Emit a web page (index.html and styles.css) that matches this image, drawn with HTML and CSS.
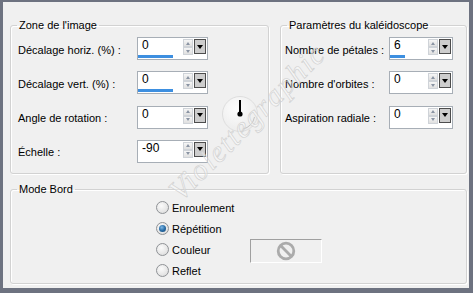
FILE: index.html
```html
<!DOCTYPE html>
<html lang="fr">
<head>
<meta charset="utf-8">
<link rel="stylesheet" href="styles.css">
</head>
<body>
<div class="dialog">
  <div class="top">
    <fieldset class="group zone">
      <legend>Zone de l'image</legend>
      <div class="zone-grid">
        <span class="lbl">Décalage horiz. (%) :</span>
        <div class="spin">
          <div class="spin-top"><span class="val">0</span><span class="arrows"><span class="up"></span><span class="down"></span></span><span class="drop"></span></div>
          <div class="bar"><span class="fill" style="width:35px"></span></div>
        </div>
        <span class="lbl">Décalage vert. (%) :</span>
        <div class="spin">
          <div class="spin-top"><span class="val">0</span><span class="arrows"><span class="up"></span><span class="down"></span></span><span class="drop"></span></div>
          <div class="bar"><span class="fill" style="width:35px"></span></div>
        </div>
        <div class="dial">
          <svg width="38" height="38" viewBox="0 0 38 38">
            <defs>
              <radialGradient id="dg" cx="0.4" cy="0.35" r="0.7">
                <stop offset="0" stop-color="#fdfdfd"/>
                <stop offset="1" stop-color="#ebebeb"/>
              </radialGradient>
            </defs>
            <circle cx="19" cy="19" r="17.5" fill="url(#dg)" stroke="#dedede" stroke-width="1"/>
            <path d="M33.5 22 A15 15 0 0 1 22 34" fill="none" stroke="#c4c4c4" stroke-width="1"/>
            <line x1="19" y1="5" x2="19" y2="19" stroke="#000" stroke-width="2"/>
            <circle cx="19" cy="19" r="2.6" fill="#000"/>
          </svg>
        </div>
        <span class="lbl">Angle de rotation :</span>
        <div class="spin">
          <div class="spin-top"><span class="val">0</span><span class="arrows"><span class="up"></span><span class="down"></span></span><span class="drop"></span></div>
          <div class="bar"></div>
        </div>
        <span class="lbl">Échelle :</span>
        <div class="spin">
          <div class="spin-top"><span class="val">-90</span><span class="arrows"><span class="up"></span><span class="down"></span></span><span class="drop"></span></div>
          <div class="bar"></div>
        </div>
      </div>
    </fieldset>
    <fieldset class="group kal">
      <legend>Paramètres du kaléidoscope</legend>
      <div class="kal-grid">
        <span class="lbl">Nombre de pétales :</span>
        <div class="spin narrow">
          <div class="spin-top"><span class="val">6</span><span class="arrows"><span class="up"></span><span class="down"></span></span><span class="drop"></span></div>
          <div class="bar"><span class="fill" style="width:15px"></span></div>
        </div>
        <span class="lbl">Nombre d'orbites :</span>
        <div class="spin narrow">
          <div class="spin-top"><span class="val">0</span><span class="arrows"><span class="up"></span><span class="down"></span></span><span class="drop"></span></div>
          <div class="bar"></div>
        </div>
        <span class="lbl">Aspiration radiale :</span>
        <div class="spin narrow">
          <div class="spin-top"><span class="val">0</span><span class="arrows"><span class="up"></span><span class="down"></span></span><span class="drop"></span></div>
          <div class="bar"></div>
        </div>
      </div>
    </fieldset>
  </div>
  <fieldset class="group mode">
    <legend>Mode Bord</legend>
    <div class="mode-grid">
      <label class="opt"><span class="radio"></span>Enroulement</label>
      <label class="opt"><span class="radio on"></span>Répétition</label>
      <label class="opt"><span class="radio"></span>Couleur</label>
      <div class="swatch">
        <svg width="22" height="22" viewBox="0 0 22 22">
          <circle cx="11" cy="11" r="7.8" fill="none" stroke="#ababab" stroke-width="2.8"/>
          <line x1="5.6" y1="5.6" x2="16.4" y2="16.4" stroke="#ababab" stroke-width="2.8"/>
        </svg>
      </div>
      <label class="opt"><span class="radio"></span>Reflet</label>
    </div>
  </fieldset>
  <div class="watermark">Violettegraphic</div>
</div>
</body>
</html>
```

FILE: styles.css
```css
* { box-sizing: border-box; }
html, body { margin: 0; padding: 0; }
body {
  width: 473px;
  height: 293px;
  overflow: hidden;
  font-family: "Liberation Sans", Arial, sans-serif;
  font-size: 11px;
  color: #000;
}
.dialog {
  position: relative;
  width: 473px;
  height: 293px;
  background: #f0f0f0;
  border-style: solid;
  border-color: #6d7280;
  border-width: 2px 4px 5px 3px;
  padding: 17px 2px 3px 7px;
  display: flex;
  flex-direction: column;
  overflow: hidden;
}
.top {
  display: flex;
  gap: 11px;
  height: 155px;
}
.group {
  margin: 0;
  padding: 0;
  min-width: 0;
  border: 1px solid #d2d2d2;
  border-radius: 3px;
  box-shadow: 1px 1px 0 #fff, inset 1px 1px 0 #fff;
}
.group legend {
  margin-left: 6px;
  padding: 0 2px;
  font-size: 11px;
  line-height: 13px;
}
.zone { width: 259px; height: 155px; }
.kal { width: 187px; height: 155px; }
.mode { width: 457px; height: 101px; margin-top: 9px; }

.zone-grid {
  display: grid;
  grid-template-columns: 119px 71px 51px;
  grid-template-rows: repeat(4, 23px);
  row-gap: 11.33px;
  padding: 5px 0 0 7px;
}
.kal-grid {
  display: grid;
  grid-template-columns: 104px 64px;
  grid-template-rows: repeat(3, 23px);
  row-gap: 11.33px;
  padding: 5px 0 0 4px;
}
.lbl {
  grid-column: 1;
  align-self: center;
  padding-top: 2px;
  white-space: nowrap;
}
.spin {
  grid-column: 2;
  width: 71px;
  height: 23px;
  border: 1px solid #a7aeb6;
  background: #fff;
  display: flex;
  flex-direction: column;
}
.spin.narrow { width: 64px; }
.spin-top {
  display: flex;
  height: 17px;
  padding-top: 1px;
}
.val {
  flex: 1;
  padding-left: 4px;
  font-size: 12px;
  line-height: 13px;
}
.arrows {
  width: 10px;
  display: flex;
  flex-direction: column;
  gap: 0;
}
.arrows span {
  height: 8px;
  background: linear-gradient(#f6f6f6, #e0e0e0);
  border: 1px solid #cfd3d8;
  display: flex;
  align-items: center;
  justify-content: center;
}
.arrows .up::after {
  content: "";
  border-left: 2.5px solid transparent;
  border-right: 2.5px solid transparent;
  border-bottom: 3px solid #8a94a3;
}
.arrows .down::after {
  content: "";
  border-left: 2.5px solid transparent;
  border-right: 2.5px solid transparent;
  border-top: 3px solid #8a94a3;
}
.drop {
  width: 12px;
  height: 15px;
  margin: 0 1px 0 1px;
  background: #cdcdcd;
  border: 1px solid #4d4d4d;
  display: flex;
  align-items: center;
  justify-content: center;
}
.drop::after {
  content: "";
  border-left: 3.5px solid transparent;
  border-right: 3.5px solid transparent;
  border-top: 4px solid #000;
}
.bar {
  height: 3px;
  margin-top: 0;
  display: flex;
}
.fill {
  display: block;
  height: 3px;
  background: #3d8fe0;
}
.dial {
  grid-column: 3;
  grid-row: 2 / span 2;
  align-self: end;
  margin: 0 0 -4px 13px;
  width: 38px;
  height: 38px;
}
.dial svg { display: block; }

.mode-grid {
  display: grid;
  grid-template-columns: 94px 72px;
  grid-template-rows: repeat(4, 21px);
  padding: 1px 0 0 145px;
}
.opt {
  grid-column: 1;
  display: flex;
  align-items: center;
  gap: 3px;
  white-space: nowrap;
}
.radio {
  width: 13px;
  height: 13px;
  border-radius: 50%;
  border: 1px solid #8f9296;
  background: radial-gradient(circle at 40% 35%, #fbfbfb 0%, #e6e6e6 60%, #d4d4d4 100%);
  display: flex;
  align-items: center;
  justify-content: center;
}
.radio.on::after {
  content: "";
  width: 7px;
  height: 7px;
  border-radius: 50%;
  background: radial-gradient(circle at 40% 35%, #7fb8e6 0%, #2a6ea8 50%, #0e3f6e 100%);
}
.swatch {
  grid-column: 2;
  grid-row: 3;
  width: 72px;
  height: 24px;
  align-self: start;
  border-style: solid;
  border-width: 1px;
  border-color: #a0a0a0 #fff #fff #a0a0a0;
  display: flex;
  align-items: center;
  justify-content: center;
}
.swatch svg { display: block; }

.watermark {
  position: absolute;
  left: 244px;
  top: 120px;
  transform: translate(-50%, -50%) rotate(-45deg);
  font-family: "Liberation Serif", serif;
  font-style: italic;
  font-size: 30px;
  letter-spacing: 1.5px;
  color: rgba(255, 255, 255, 0.35);
  -webkit-text-stroke: 0.6px #cfcfcf;
  white-space: nowrap;
  pointer-events: none;
}
```
